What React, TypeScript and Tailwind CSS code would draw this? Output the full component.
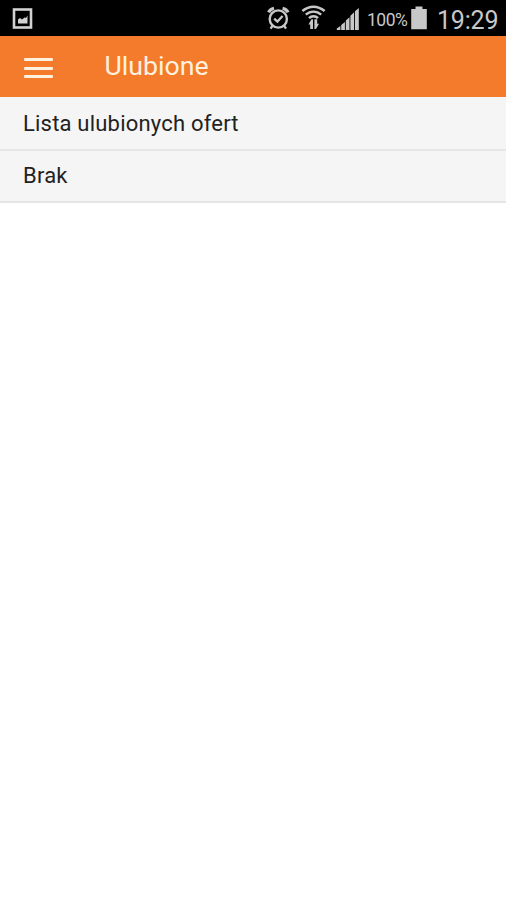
const offers = ["Brak"];

function PictureIcon() {
  return (
    <svg className="ml-3 mt-2 h-[22px] w-[21px]" viewBox="0 0 21 22" fill="none">
      <rect x="2" y="1.5" width="17" height="18" stroke="#d2d2d2" strokeWidth="2.6" />
      <path d="M6 15.5v-4l2 -1.5 2 1.5 2.5 -2 1.5 .5 1.5 -2.5v8z" fill="#d2d2d2" />
    </svg>
  );
}

function AlarmIcon() {
  return (
    <svg className="h-9 w-6" viewBox="0 0 24 36" fill="none" stroke="#c8c8c8">
      <circle cx="12.3" cy="19" r="8.6" strokeWidth="2.4" />
      <path d="M8.2 18.6l3.2 3 5.2-5.6" strokeWidth="2.3" />
      <path d="M2.6 12.4q1.4-3.4 5.4-4.2M22 12.4q-1.4-3.4-5.4-4.2" strokeWidth="3.2" />
      <path d="M6.6 25.6l-2 3M18 25.6l2 3" strokeWidth="2.4" />
    </svg>
  );
}

function WifiIcon() {
  return (
    <svg className="h-9 w-[26px]" viewBox="0 0 26 36" fill="none" stroke="#c8c8c8">
      <path d="M2.4 11q5.3-4.3 11.1-4.3t11.1 4.3" strokeWidth="2.6" />
      <path d="M5.8 14.7q3.4-3.1 7.7-3.1t7.7 3.1" strokeWidth="2.4" />
      <path d="M9 18.2q1.9-2 4.5-2t4.5 2" strokeWidth="2.4" />
      <path d="M8.4 24.5l3.1-5.3h1.5v9.8h-2.8v-4.5zM19 23.7l-3 5.3h-1.6v-9.8h2.8v4.5z" fill="#c8c8c8" stroke="none" />
    </svg>
  );
}

function SignalIcon() {
  return (
    <svg className="h-9 w-[23px]" viewBox="0 0 23 36" fill="#c8c8c8">
      <path d="M0.8 30v-1.5l3.6-2.6v4.1zM5.2 30v-5l3.7-3v8zM9.8 30v-9.4l3.7-3.4v12.8zM14.4 30v-14.3l3.7-3.4v17.7zM19 30v-18.7l3.8-3.4v22.1z" />
    </svg>
  );
}

function BatteryIcon() {
  return (
    <svg className="h-9 w-4" viewBox="0 0 16 36" fill="#c8c8c8">
      <path d="M4.5 9v-2.6h7v2.6h4.3v20.3h-15.6v-20.3z" />
    </svg>
  );
}

function StatusBar() {
  return (
    <div className="flex h-9 items-start bg-black text-[#c8c8c8]">
      <PictureIcon />
      <div className="ml-auto flex h-9 items-start pr-2">
        <AlarmIcon />
        <div className="ml-[10px]">
          <WifiIcon />
        </div>
        <div className="ml-[10px]">
          <SignalIcon />
        </div>
        <span className="ml-2 mt-[2px] w-10 whitespace-nowrap text-[17.5px] leading-9 tracking-[-0.5px]">100%</span>
        <div className="ml-1">
          <BatteryIcon />
        </div>
        <span className="ml-[10px] mt-[3px] w-[61px] whitespace-nowrap text-[25px] leading-9 tracking-[-0.2px]">19:29</span>
      </div>
    </div>
  );
}

function Header() {
  return (
    <header className="flex h-[61px] items-center bg-[#f47b2c] text-[#fff1df]">
      <button type="button" aria-label="Menu" className="ml-6 mt-[3px] flex w-[29px] flex-col gap-[5.5px]">
        <span className="h-[3px] w-full rounded-[1px] bg-[#fff1df]" />
        <span className="h-[3px] w-full rounded-[1px] bg-[#fff1df]" />
        <span className="h-[3px] w-full rounded-[1px] bg-[#fff1df]" />
      </button>
      <h1 className="ml-[51.5px] text-[26.7px] leading-[61px]">Ulubione</h1>
    </header>
  );
}

export default function App() {
  return (
    <div className="flex h-[900px] w-[506px] flex-col overflow-hidden bg-white font-[Roboto,sans-serif]">
      <StatusBar />
      <Header />
      <main className="text-[22px] tracking-[0.2px] text-[#222222]">
        <h2 className="h-[54px] border-b-2 border-[#e6e6e6] bg-[#f5f5f5] pl-[23px] leading-[53px]">Lista ulubionych ofert</h2>
        <ul>
          {offers.map((offer) => (
            <li key={offer} className="h-[52px] border-b-2 border-[#e6e6e6] bg-[#f5f5f5] pl-[23px] leading-[49px]">
              {offer}
            </li>
          ))}
        </ul>
      </main>
    </div>
  );
}
